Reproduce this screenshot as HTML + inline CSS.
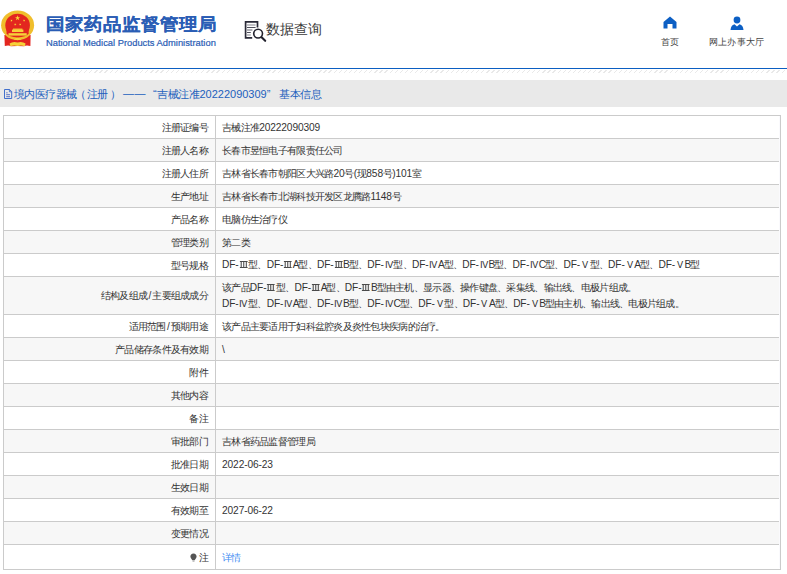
<!DOCTYPE html>
<html><head><meta charset="utf-8">
<style>
html,body{margin:0;padding:0;}
body{width:787px;height:574px;overflow:hidden;background:#fff;position:relative;font-family:"Liberation Sans",sans-serif;}
.abs{position:absolute;white-space:nowrap;}
#title{left:46px;top:14px;font-size:19px;font-weight:bold;color:#2a5db5;letter-spacing:0px;line-height:22px;transform:scaleY(0.92);transform-origin:0 0;-webkit-text-stroke:0.12px #2a5db5;}
#sub{left:46px;top:36.5px;font-size:9.35px;color:#2a5db5;-webkit-text-stroke:0.2px #2a5db5;line-height:12px;}
#dq{left:266px;top:20px;font-size:14.4px;letter-spacing:-0.05px;color:#3a3a3a;line-height:18px;}
.nav{font-size:9.4px;letter-spacing:0.2px;color:#444;line-height:11px;}
#blue{left:0;top:68px;width:787px;height:1px;background:#0b5ec2;}
#hatch{left:0;top:70px;width:787px;height:2.5px;background:repeating-linear-gradient(135deg,#e9e9e9 0 0.9px,#fff 0.9px 3.6px);}
#bar{left:0;top:80px;width:787px;height:27px;background:#e9e9e9;}
.crumb{top:87px;font-size:11px;letter-spacing:-0.45px;color:#2260bd;line-height:14px;}
table{position:absolute;left:3px;top:115px;width:778px;border-collapse:collapse;font-size:9.7px;color:#333;}
.n{font-size:10.2px;letter-spacing:-0.12px;}
.s{margin:0 1.2px;}
.lt{letter-spacing:-1.2px;}
.r3{vertical-align:0;}
.r{display:inline-block;width:9.5px;text-align:center;font-size:9.2px;}
.pin{display:inline-block;width:6px;height:8px;vertical-align:-1px;margin-right:1px;background:radial-gradient(circle at 50% 38%,#555 0 2.6px,transparent 2.8px),linear-gradient(#555,#555) 50% 100%/1px 3px no-repeat;}
td{letter-spacing:-0.72px;border:1px solid #cbcbcb;height:21px;padding:1px 0 0 0;line-height:15.4px;}
td.l{width:204px;text-align:right;padding-right:7px;}
td.v{padding-left:6px;}
tr:nth-child(even) td{background:#f7f7f7;}
tr.two td{height:36px;}
tr:last-child td{height:23px;}
a{color:#3f8ef2;text-decoration:none;}
</style></head><body>
<!-- emblem -->
<svg class="abs" style="left:0px;top:6px" width="40" height="44" viewBox="0 0 40 44">
  <path d="M4.4 29 H30.6 L30.4 40 Q26 39 24 40.3 L17.6 40 L11 40.3 Q9 39 4.8 40 Z" fill="#e3261f"/>
  <ellipse cx="17.6" cy="19.3" rx="16.5" ry="14.8" fill="#f0be2c"/>
  <ellipse cx="17.6" cy="19.35" rx="12.3" ry="11.65" fill="#e3261f"/>
  <path d="M6.2 22 H29 L28.6 27.5 Q26 31.2 17.6 31.4 Q9.2 31.2 6.6 27.5 Z" fill="#e3261f"/>
  <polygon points="17.60,9.20 18.23,11.13 20.26,11.13 18.62,12.33 19.25,14.27 17.60,13.07 15.95,14.27 16.58,12.33 14.94,11.13 16.97,11.13" fill="#f8d838"/>
  <polygon points="12.15,13.47 11.95,14.40 12.77,14.87 11.83,14.97 11.64,15.89 11.25,15.03 10.31,15.13 11.01,14.50 10.63,13.63 11.45,14.11" fill="#f8d838"/>
  <polygon points="23.45,13.47 24.15,14.11 24.97,13.63 24.59,14.50 25.29,15.13 24.35,15.03 23.96,15.89 23.77,14.97 22.83,14.87 23.65,14.40" fill="#f8d838"/>
  <polygon points="15.54,17.14 15.59,18.09 16.50,18.33 15.62,18.67 15.67,19.61 15.07,18.88 14.19,19.22 14.70,18.43 14.11,17.69 15.02,17.94" fill="#f8d838"/>
  <polygon points="19.86,17.14 20.38,17.94 21.29,17.69 20.70,18.43 21.21,19.22 20.33,18.88 19.73,19.61 19.78,18.67 18.90,18.33 19.81,18.09" fill="#f8d838"/>
  <rect x="13" y="22.6" width="9.4" height="1.2" fill="#f8d838"/>
  <rect x="12" y="23.6" width="11.4" height="2.4" fill="#f6d23a"/>
  <rect x="8.5" y="27.2" width="18.2" height="2.4" fill="#f6d23a"/>
  <path d="M13.7 33.5 Q17.6 30 21.5 33.5 L17.6 34.2 Z" fill="#f6d23a"/>
  <path d="M9.6 37.6 Q13 35.2 17.6 36.6 Q22 35.2 25.6 37.6 L24.8 40.2 Q21 39 17.6 40 Q14 39 10.4 40.2 Z" fill="#f6d23a"/>
</svg>
<div id="title" class="abs">国家药品监督管理局</div>
<div id="sub" class="abs">National Medical Products Administration</div>
<!-- data query icon -->
<svg class="abs" style="left:242px;top:18px" width="26" height="26" viewBox="0 0 26 26">
  <path d="M15.5 9.6 V3.8 H3.6 V19.9 H10.2" fill="none" stroke="#2a2a38" stroke-width="1.7"/>
  <path d="M5 7 H13.6" stroke="#8e8e98" stroke-width="1.1"/>
  <path d="M5 9.5 H13.6" stroke="#3a3a48" stroke-width="0.9"/>
  <path d="M5 12 H10.4" stroke="#70707c" stroke-width="1.1"/>
  <path d="M5 14.5 H8.8" stroke="#3a3a48" stroke-width="0.9"/>
  <path d="M5 17 H8.8" stroke="#8e8e98" stroke-width="1.1"/>
  <circle cx="16.1" cy="15.6" r="4.4" fill="#fff" stroke="#22222e" stroke-width="1.6"/>
  <path d="M19.6 19.2 L23.2 22.8" stroke="#22222e" stroke-width="2.1" stroke-linecap="round"/>
</svg>
<div id="dq" class="abs">数据查询</div>
<!-- home -->
<svg class="abs" style="left:663px;top:16px" width="14" height="13" viewBox="0 0 14 13">
  <path d="M7 0.5 L13.5 6 V12.5 H9.5 V8 H4.5 V12.5 H0.5 V6 Z" fill="#0c5fc4"/>
</svg>
<div class="abs nav" style="left:661px;top:36px">首页</div>
<svg class="abs" style="left:730px;top:15.7px" width="14" height="15" viewBox="0 0 14 15">
  <circle cx="7" cy="4" r="3.4" fill="#0c5fc4"/>
  <path d="M0.5 14 Q1 9 4.5 8.2 L7 10.5 L9.5 8.2 Q13 9 13.5 14 Z" fill="#0c5fc4"/>
</svg>
<div class="abs nav" style="left:709px;top:36px">网上办事大厅</div>
<div id="blue" class="abs"></div>
<div id="hatch" class="abs"></div>
<div id="bar" class="abs"></div>
<svg class="abs" style="left:4px;top:89px" width="9" height="11" viewBox="0 0 9 11">
  <path d="M0.5 0.5 H5.6 L7.7 2.6 V9.5 H0.5 Z" fill="none" stroke="#2f62c8" stroke-width="0.9"/>
  <path d="M5.4 0.6 V2.8 H7.6" fill="none" stroke="#2f62c8" stroke-width="0.8"/>
  <path d="M2.2 3.8 H3.6 M2.2 5.7 H6 M2.2 7.7 H6" stroke="#4060c0" stroke-width="0.85"/>
</svg>
<div class="abs crumb" style="left:14px;letter-spacing:-0.6px">境内医疗器械<span style="margin-left:-1px;margin-right:1px">（</span>注册<span style="margin-left:2px">）</span></div><div class="abs crumb" style="left:123px;top:86px;letter-spacing:0.6px">——</div><div class="abs crumb" style="left:153px">“<span style="margin-left:1px">吉械注准</span><span style="letter-spacing:0">20222090309</span>”</div><div class="abs crumb" style="left:279px">基本信息</div>
<table>
<tr><td class="l">注册证编号</td><td class="v">吉械注准<span class="n">20222090309</span></td></tr>
<tr><td class="l">注册人名称</td><td class="v">长春市昱恒电子有限责任公司</td></tr>
<tr><td class="l">注册人住所</td><td class="v">吉林省长春市朝阳区大兴路<span class="n">20</span>号<span class="n">(</span>现<span class="n">858</span>号<span class="n">)101</span>室</td></tr>
<tr><td class="l">生产地址</td><td class="v">吉林省长春市北湖科技开发区龙腾路<span class="n">1148</span>号</td></tr>
<tr><td class="l">产品名称</td><td class="v">电脑仿生治疗仪</td></tr>
<tr><td class="l">管理类别</td><td class="v">第二类</td></tr>
<tr><td class="l">型号规格</td><td class="v"><span class="n">DF-<svg class="r3" width="9.5" height="7" viewBox="0 0 9.5 7"><path d="M0.9 0.5 H8.6 M0.9 6.5 H8.6 M2.2 0.5 V6.5 M4.75 0.5 V6.5 M7.3 0.5 V6.5" stroke="#4a4a4a" stroke-width="1.05" fill="none"/></svg></span>型、<span class="n">DF-<svg class="r3" width="9.5" height="7" viewBox="0 0 9.5 7"><path d="M0.9 0.5 H8.6 M0.9 6.5 H8.6 M2.2 0.5 V6.5 M4.75 0.5 V6.5 M7.3 0.5 V6.5" stroke="#4a4a4a" stroke-width="1.05" fill="none"/></svg><span class="lt">A</span></span>型、<span class="n">DF-<svg class="r3" width="9.5" height="7" viewBox="0 0 9.5 7"><path d="M0.9 0.5 H8.6 M0.9 6.5 H8.6 M2.2 0.5 V6.5 M4.75 0.5 V6.5 M7.3 0.5 V6.5" stroke="#4a4a4a" stroke-width="1.05" fill="none"/></svg><span class="lt">B</span></span>型、<span class="n">DF-<span class="r">Ⅳ</span></span>型、<span class="n">DF-<span class="r">Ⅳ</span><span class="lt">A</span></span>型、<span class="n">DF-<span class="r">Ⅳ</span><span class="lt">B</span></span>型、<span class="n">DF-<span class="r">Ⅳ</span><span class="lt">C</span></span>型、<span class="n">DF-<span class="r">Ⅴ</span></span>型、<span class="n">DF-<span class="r">Ⅴ</span><span class="lt">A</span></span>型、<span class="n">DF-<span class="r">Ⅴ</span><span class="lt">B</span></span>型</td></tr>
<tr class="two"><td class="l">结构及组成<span class="n s">/</span>主要组成成分</td><td class="v">该产品<span class="n">DF-<svg class="r3" width="9.5" height="7" viewBox="0 0 9.5 7"><path d="M0.9 0.5 H8.6 M0.9 6.5 H8.6 M2.2 0.5 V6.5 M4.75 0.5 V6.5 M7.3 0.5 V6.5" stroke="#4a4a4a" stroke-width="1.05" fill="none"/></svg></span>型、<span class="n">DF-<svg class="r3" width="9.5" height="7" viewBox="0 0 9.5 7"><path d="M0.9 0.5 H8.6 M0.9 6.5 H8.6 M2.2 0.5 V6.5 M4.75 0.5 V6.5 M7.3 0.5 V6.5" stroke="#4a4a4a" stroke-width="1.05" fill="none"/></svg><span class="lt">A</span></span>型、<span class="n">DF-<svg class="r3" width="9.5" height="7" viewBox="0 0 9.5 7"><path d="M0.9 0.5 H8.6 M0.9 6.5 H8.6 M2.2 0.5 V6.5 M4.75 0.5 V6.5 M7.3 0.5 V6.5" stroke="#4a4a4a" stroke-width="1.05" fill="none"/></svg><span class="lt">B</span></span>型由主机、显示器、操作键盘、采集线、输出线、电极片组成。<br><span class="n">DF-<span class="r">Ⅳ</span></span>型、<span class="n">DF-<span class="r">Ⅳ</span><span class="lt">A</span></span>型、<span class="n">DF-<span class="r">Ⅳ</span><span class="lt">B</span></span>型、<span class="n">DF-<span class="r">Ⅳ</span><span class="lt">C</span></span>型、<span class="n">DF-<span class="r">Ⅴ</span></span>型、<span class="n">DF-<span class="r">Ⅴ</span><span class="lt">A</span></span>型、<span class="n">DF-<span class="r">Ⅴ</span><span class="lt">B</span></span>型由主机、输出线、电极片组成。</td></tr>
<tr><td class="l">适用范围<span class="n s">/</span>预期用途</td><td class="v">该产品主要适用于妇科盆腔炎及炎性包块疾病的治疗。</td></tr>
<tr><td class="l">产品储存条件及有效期</td><td class="v"><span class="n">\</span></td></tr>
<tr><td class="l">附件</td><td class="v"></td></tr>
<tr><td class="l">其他内容</td><td class="v"></td></tr>
<tr><td class="l">备注</td><td class="v"></td></tr>
<tr><td class="l">审批部门</td><td class="v">吉林省药品监督管理局</td></tr>
<tr><td class="l">批准日期</td><td class="v"><span class="n">2022-06-23</span></td></tr>
<tr><td class="l">生效日期</td><td class="v"></td></tr>
<tr><td class="l">有效期至</td><td class="v"><span class="n">2027-06-22</span></td></tr>
<tr><td class="l">变更情况</td><td class="v"></td></tr>
<tr><td class="l"><svg width='7' height='9' viewBox='0 0 7 9' style='vertical-align:-1px;margin-right:2px'><path d='M3.5 0.4 C5.5 0.4 6.6 1.9 6.6 3.6 C6.6 5.2 5.2 6.3 4.6 7.2 L2.4 7.2 C1.8 6.3 0.4 5.2 0.4 3.6 C0.4 1.9 1.5 0.4 3.5 0.4Z' fill='#555'/><rect x='2.5' y='7.6' width='2' height='1' fill='#999'/></svg>注</td><td class="v"><a>详情</a></td></tr>
</table>
<div class="abs" style="left:779px;top:116px;width:1px;height:452px;background:#fafafd"></div>
</body></html>
